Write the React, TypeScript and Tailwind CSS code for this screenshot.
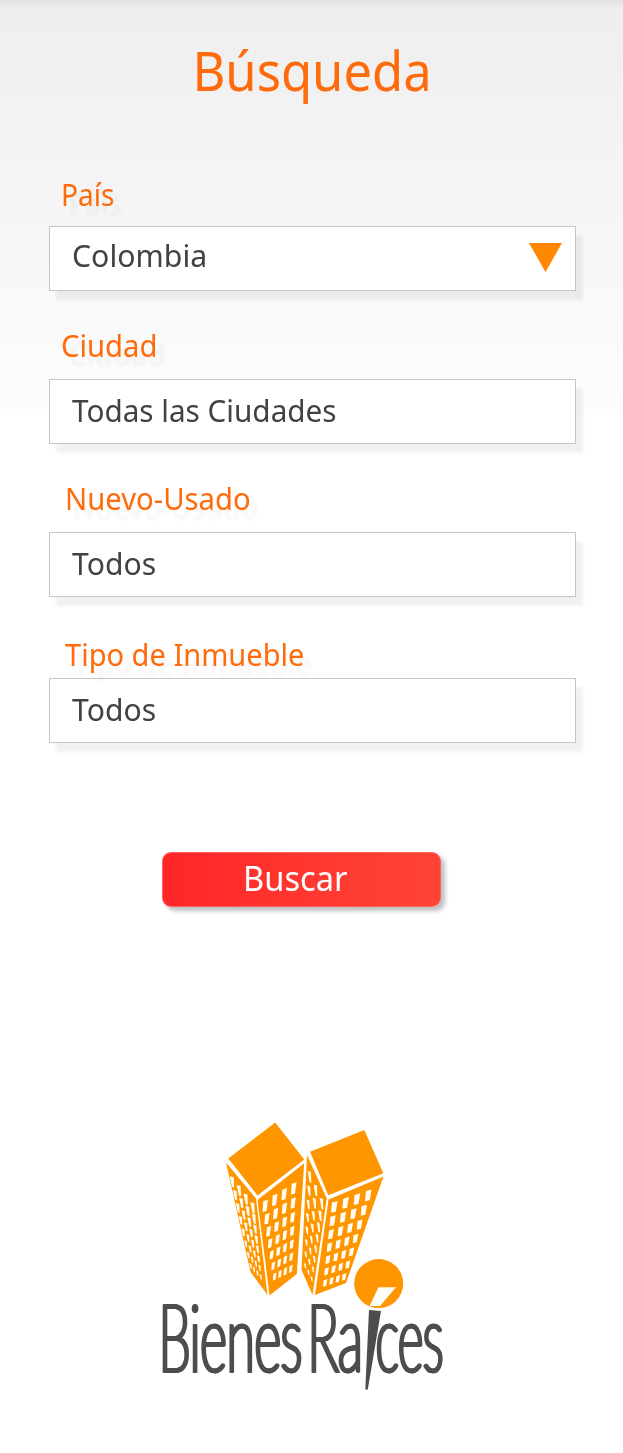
import React from "react";

type Point = [number, number];
type Quad = [Point, Point, Point, Point];

interface FaceProps {
  outline: string;
  /* Centres of the corner windows: top-left, top-right, bottom-right, bottom-left. */
  grid: Quad;
  cols: number;
  rows: number;
  /* Window size in the first and in the last row. */
  from: Point;
  to: Point;
  side?: boolean;
}

function Face({ outline, grid: q, cols, rows, from, to, side }: FaceProps) {
  let d = "";
  for (let r = 0; r < rows; r++) {
    const t = r / (rows - 1);
    const v = t * (1.12 - 0.12 * t);
    const w = from[0] + (to[0] - from[0]) * t;
    const h = from[1] + (to[1] - from[1]) * t;
    for (let c = 0; c < cols; c++) {
      const u = c / (cols - 1);
      const mid = (i: 0 | 1) =>
        (1 - v) * ((1 - u) * q[0][i] + u * q[1][i]) + v * ((1 - u) * q[3][i] + u * q[2][i]);
      const shape: Point[] = side
        ? [[-w / 2, -h / 2], [w * 0.4, -h / 2 + 1], [w / 2, h / 2], [0, h / 2 - 1]]
        : [[-w * 0.35, -h / 2 + 0.8], [w * 0.6, -h / 2 - 0.8], [w * 0.3, h / 2 - 0.6], [-w * 0.5, h / 2 + 0.4]];
      d += `M${shape.map(([x, y]) => `${(mid(0) + x).toFixed(2)} ${(mid(1) + y).toFixed(2)}`).join("L")}Z`;
    }
  }
  return (
    <>
      <polygon fill="#ff9600" points={outline} />
      <path fill="#fffdf3" d={d} />
    </>
  );
}

function Logo() {
  return (
    <svg className="block" width="310" height="280" viewBox="148 1115 310 280" role="img" aria-label="Bienes Raíces">
      <g fill="#ff9600">
        <polygon points="228.3,1158.5 275.2,1122.5 304.3,1159.5 257.5,1195.5" />
        <polygon points="310,1151.7 364.3,1130 383.3,1173.3 328.3,1195.3" />
      </g>
      <Face outline="226,1162.5 256,1198.5 267.5,1295 250.5,1272" grid={[[232, 1182], [252.5, 1208], [260.5, 1277], [250.5, 1266]]} cols={4} rows={8} from={[4.4, 11.5]} to={[2.4, 6]} side />
      <Face outline="257.5,1200 304.2,1163.3 296.8,1274 269.5,1295.5" grid={[[265, 1206], [293.5, 1188.5], [290.7, 1269], [274.5, 1276.7]]} cols={4} rows={7} from={[5, 11]} to={[3.3, 7]} />
      <Face outline="307,1155 326.8,1198.5 312.5,1295 301.5,1270" grid={[[309.5, 1177], [321.5, 1204], [311.5, 1279], [305, 1266]]} cols={3} rows={8} from={[3.6, 12]} to={[2.2, 6]} side />
      <Face outline="328.5,1199.5 383.5,1176.5 346,1283 315,1295" grid={[[334, 1207], [368, 1195.5], [344, 1277], [325, 1283]]} cols={4} rows={7} from={[6, 10.5]} to={[4, 6.5]} />
      <circle cx="378.7" cy="1283.6" r="24.5" fill="#ff9600" />
      <polygon points="378.5,1287.3 396,1287.3 380,1306 369.5,1306" fill="#fffdfa" />
      <g className="font-['Lato',sans-serif] font-thin [filter:drop-shadow(1px_0_0_#4d4d4d)_drop-shadow(-1px_0_0_#4d4d4d)]" fontSize="92.5" fill="#4d4d4d" stroke="#4d4d4d" strokeWidth="3.6">
        <text transform="translate(158.7 1371.3) scale(.553 1)">Bienes</text>
        <text transform="translate(307.5 1371.3) scale(.565 1)">Ra</text>
        <text transform="translate(375.8 1371.3) scale(.525 1)">ces</text>
      </g>
      <polygon points="369,1310 381,1311 367.8,1389.5 365.3,1389.5" fill="#4d4d4d" />
    </svg>
  );
}

const fields = [
  { label: "País", value: "Colombia", open: true, labelBox: "pl-[12px] mb-[11px]", labelFit: "scale-x-[.936]", valueFit: "scale-x-[.96]", pad: "pb-[5px]" },
  { label: "Ciudad", value: "Todas las Ciudades", labelBox: "mt-[35px] pl-[12px] mb-[13px]", labelFit: "scale-x-[.975]", valueFit: "scale-x-[.943]", pad: "pb-[3px]" },
  { label: "Nuevo-Usado", value: "Todos", labelBox: "mt-[35px] pl-[16px] mb-[13px]", labelFit: "scale-x-[.975]", valueFit: "scale-x-[.957]", pad: "pb-[3px]" },
  { label: "Tipo de Inmueble", value: "Todos", labelBox: "mt-[38px] pl-[16px] mb-[3px]", labelFit: "scale-x-[.968]", valueFit: "scale-x-[.957]", pad: "pb-[3px]" },
];

export default function App() {
  return (
    <main className="h-[1453px] w-full overflow-hidden bg-white font-['Noto_Sans',sans-serif]">
      <div className="h-full bg-[linear-gradient(#0000000d,#00000000_10px),linear-gradient(#eeeeee,#f5f5f5_200px,#fdfdfd_415px,#ffffff_416px)]">
        <header className="flex h-[175px] justify-center pt-[30px]">
          <h1 className="h-20 origin-center scale-x-[.913] whitespace-nowrap text-[55.5px] leading-[80px] text-[#ff6a0a]">Búsqueda</h1>
        </header>
        <form className="flex flex-col" onSubmit={(e) => e.preventDefault()}>
          <div className="ml-[49px] w-[527px]">
            {fields.map((f) => (
              <div key={f.label}>
                <div className={`flex h-10 ${f.labelBox}`}>
                  <label className={`origin-left whitespace-nowrap text-[30px] leading-10 text-[#ff6a0a] [text-shadow:8px_9px_4px_#0000000d] ${f.labelFit}`}>{f.label}</label>
                </div>
                <div className={`flex h-[65px] items-center justify-between border border-[#c6c6c6] bg-white pl-[22px] pr-[13px] shadow-[7px_9px_3px_#0000000e] ${f.pad}`}>
                  <span className={`origin-left whitespace-nowrap text-[31.5px] leading-10 text-[#424242] ${f.valueFit} ${f.open ? "-mt-0.5" : ""}`}>{f.value}</span>
                  {f.open && (
                    <svg className="mt-0.5" width="33" height="29" viewBox="0 0 33 29" aria-hidden="true">
                      <path d="M0 0H33L16.5 29Z" fill="#ff8800" />
                    </svg>
                  )}
                </div>
              </div>
            ))}
          </div>
          <button type="submit" className="ml-[162px] mt-[109px] flex h-[55px] w-[279px] items-center justify-center rounded-[9px] border border-[#ff625c] bg-linear-to-r from-[#ff2528] to-[#ff4336] pb-[3px] pr-3 shadow-[4px_4px_4px_#00000040]">
            <span className="scale-x-[.945] text-[34.5px] leading-10 text-white">Buscar</span>
          </button>
        </form>
        <div className="ml-[148px] mt-[208px]">
          <Logo />
        </div>
      </div>
    </main>
  );
}
